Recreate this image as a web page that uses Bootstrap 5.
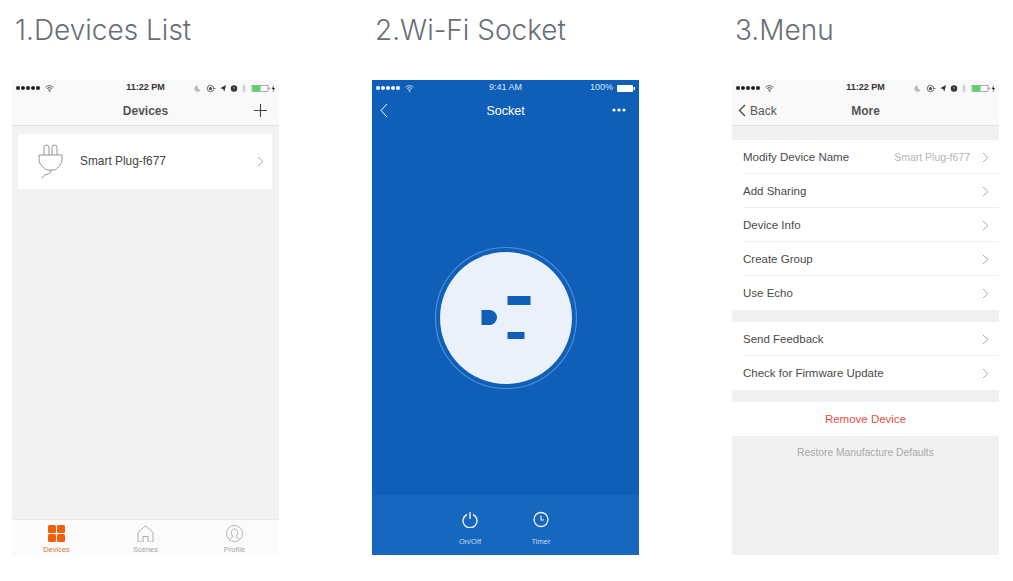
<!DOCTYPE html>
<html lang="en">
<head>
  <meta charset="UTF-8">
  <meta name="viewport" content="width=device-width, initial-scale=1.0">
  <title>App Guide</title>
  <link href="https://cdn.jsdelivr.net/npm/bootstrap@5.3.2/dist/css/bootstrap.min.css" rel="stylesheet">
  <style>
    body {
      background-color: #fff;
      font-family: "Liberation Sans", Arial, sans-serif;
      color: #444;
      overflow: hidden;
    }
    .guide-page {
      padding-left: 12px;
      gap: 93px;
      height: 581px;
    }
    .guide-col {
      width: 267px;
    }
    .guide-title {
      height: 80px;
      margin: 0;
      padding: 11px 0 0 3px;
      font-family: "Inter", sans-serif;
      font-weight: 300;
      font-size: 28px;
      line-height: 38px;
      color: #6a6f75;
    }
    .phone {
      height: 475px;
      font-size: 11.5px;
    }
    .phone-light { background-color: #f2f2f2; }
    .phone-blue { background-color: #0f5fb8; color: #fff; }
    .status-row {
      height: 18px;
      padding: 0 4px 2px;
      font-size: 9px;
      position: relative;
    }
    .status-time {
      position: absolute;
      left: 0;
      right: 0;
      text-align: center;
      font-weight: 700;
      color: #333;
    }
    .phone-blue .status-time { font-weight: 400; color: #dbe8f7; }
    .top-head { background-color: #f9f9f9; border-bottom: 1px solid #e2e2e2; }
    .nav-row {
      height: 27px;
      padding: 0 12px 3px 6px;
      position: relative;
    }
    .nav-name {
      position: absolute;
      left: 0;
      right: 0;
      top: 4px;
      text-align: center;
      font-size: 12px;
      font-weight: 700;
      color: #555;
    }
    .phone-blue .nav-name { font-weight: 400; font-size: 12.5px; color: #fff; }
    .phone-blue .nav-row { padding-left: 8px; padding-right: 13px; }
    .nav-back { font-size: 12px; color: #555; margin: 1px 0 0 4px; }
    .device-tile {
      margin: 8px 7px 0 6px;
      height: 55px;
      background-color: #fff;
      padding: 0 8px 0 20px;
    }
    .device-name { margin-left: 15px; font-size: 11.9px; }
    .tab-row {
      height: 36px;
      background-color: #fbfbfb;
      border-top: 1px solid #e9e9e9;
      font-size: 7.5px;
      color: #a5a5a5;
    }
    .tab-cell { width: 89px; line-height: 8px; padding-top: 5px; }
    .tab-on { color: #e8703a; }
    .tab-label { margin-top: 4px; }
    .socket-wrap { padding-top: 16px; }
    .socket-foot {
      height: 60px;
      background-color: #1767be;
      gap: 41px;
      padding-top: 16px;
      font-size: 7.5px;
      color: #c5d9f0;
    }
    .foot-cell { width: 30px; line-height: 8px; }
    .foot-label { margin-top: 10px; }
    .menu-gap { height: 14px; background-color: #f1f1f1; }
    .menu-gap-sm { height: 12px; background-color: #f1f1f1; }
    .menu-group { background-color: #fff; }
    .menu-line {
      height: 34px;
      padding: 1px 10px 0 11px;
      color: #4a4a4a;
      position: relative;
    }
    .menu-line svg { margin-top: -1px; }
    .menu-line + .menu-line::before {
      content: "";
      position: absolute;
      top: -1px;
      left: 12px;
      right: 0;
      border-top: 1px solid #eee;
    }
    .menu-note { font-size: 10.5px; color: #b5b5b5; margin-right: 12px; }
    .menu-danger { height: 34px; padding-top: 1px; background-color: #fff; color: #e8503f; }
    .menu-rest {
      background-color: #f1f1f1;
      padding-top: 9px;
      font-size: 10.3px;
      color: #aaa;
    }
  </style>
</head>
<body>

  <svg width="0" height="0" class="position-absolute">
    <symbol id="ico-wifi" viewBox="0 0 10 8">
      <path d="M.5 2.600a6.400 6.400 0 0 1 9 0M2 4.200a4.300 4.300 0 0 1 6 0M3.400 5.700a2.200 2.200 0 0 1 3.200 0" fill="none" stroke="currentColor" stroke-width=".8"/>
      <path d="M5 8 3.900 6.800a1.500 1.500 0 0 1 2.200 0z" fill="currentColor"/>
    </symbol>
    <symbol id="ico-chev" viewBox="0 0 7 11">
      <path d="M1 1l5 4.500-5 4.500" fill="none" stroke="#a9a9a9" stroke-width="1"/>
    </symbol>
    <symbol id="ico-dots" viewBox="0 0 25 4">
      <g fill="currentColor"><circle cx="2" cy="2" r="2"/><circle cx="7" cy="2" r="2"/><circle cx="12" cy="2" r="2"/><circle cx="17" cy="2" r="2"/><circle cx="22" cy="2" r="2"/></g>
    </symbol>
    <symbol id="ico-status" viewBox="0 0 84 9">
      <path d="M7 1.200a3.300 3.300 0 1 0 2.600 5A3.500 3.500 0 0 1 7 1.200z" fill="#b9b9b9"/>
      <circle cx="19.500" cy="4.500" r="3.200" fill="none" stroke="#444" stroke-width=".8"/>
      <circle cx="19.500" cy="4.500" r="1.500" fill="#444"/>
      <path d="M23 4.500h1.500" stroke="#444" stroke-width=".8"/>
      <path d="M35 1l-1.800 7-1-3-3-.8z" fill="#333"/>
      <circle cx="43" cy="4.500" r="3.200" fill="#333"/>
      <path d="M43 3v1.800" stroke="#fff" stroke-width=".7"/>
      <path d="M51.500 2.500l3 4-1.500 2V.5L54.500 2.500l-3 4" fill="none" stroke="#b9b9b9" stroke-width=".7"/>
      <rect x="61" y="1.500" width="16" height="6" fill="#fff" stroke="#777" stroke-width=".6"/>
      <rect x="61.500" y="2" width="8" height="5" fill="#4cd964"/>
      <rect x="77.500" y="3.500" width="1" height="2" fill="#777"/>
      <path d="M83 1l-2.500 4h1.700L81.500 8.500 84 4h-1.700z" fill="#333"/>
    </symbol>
  </svg>

  <div class="guide-page d-flex">

    <div class="guide-col">
      <h1 class="guide-title">1.Devices List</h1>
      <div class="phone phone-light d-flex flex-column">
        <div class="top-head">
          <div class="status-row d-flex align-items-center justify-content-between">
            <span class="status-time">11:22 PM</span>
            <span class="d-flex align-items-center gap-1 text-dark">
              <svg width="25" height="4"><use href="#ico-dots"/></svg>
              <svg width="9" height="7"><use href="#ico-wifi"/></svg>
            </span>
            <svg width="84" height="9"><use href="#ico-status"/></svg>
          </div>
          <div class="nav-row d-flex align-items-center justify-content-end">
            <span class="nav-name">Devices</span>
            <svg width="13" height="13" viewBox="0 0 13 13"><path d="M6.500 0v13M0 6.500h13" stroke="#444" stroke-width="1.100"/></svg>
          </div>
        </div>
        <div class="device-tile d-flex align-items-center">
          <svg width="27" height="36" viewBox="0 0 27 36" class="flex-shrink-0">
            <path d="M6 11V3.500a2.500 2.500 0 0 1 5 0V11M14 11V3.500a2.500 2.500 0 0 1 5 0V11M1 11h23v4c0 5-4 9-7 11H9c-3-2-8-5-8-11zM13 26c0 3-2 4-5 4.500-2 .5-3 2-4 4" fill="none" stroke="#888" stroke-width=".9"/>
          </svg>
          <span class="device-name flex-grow-1">Smart Plug-f677</span>
          <svg width="7" height="11"><use href="#ico-chev"/></svg>
        </div>
        <div class="flex-grow-1"></div>
        <div class="tab-row d-flex justify-content-between text-center">
          <div class="tab-cell tab-on d-flex flex-column align-items-center">
            <svg width="17" height="17" viewBox="0 0 17 17"><g fill="#f2600c"><rect width="8" height="8" rx="1.500"/><rect x="9" width="8" height="8" rx="1.500"/><rect y="9" width="8" height="8" rx="1.500"/><rect x="9" y="9" width="8" height="8" rx="1.500"/></g></svg>
            <span class="tab-label">Devices</span>
          </div>
          <div class="tab-cell d-flex flex-column align-items-center">
            <svg width="17" height="17" viewBox="0 0 17 17"><path d="M1 7.500 8.500.8 16 7.500V17H11V11.500H6V17H1z" fill="none" stroke="#999" stroke-width=".8"/></svg>
            <span class="tab-label">Scenes</span>
          </div>
          <div class="tab-cell d-flex flex-column align-items-center">
            <svg width="19" height="17" viewBox="0 0 19 19" overflow="visible"><circle cx="9.500" cy="9.500" r="9" fill="none" stroke="#999" stroke-width=".8"/><path d="M7.500 12.500c-2.500-3-1.800-8 2-8s4.500 5 2 8c0 1.500 1.500 2 3.500 3M7.500 12.500c0 1.500-1.500 2-3.500 3" fill="none" stroke="#999" stroke-width=".8"/></svg>
            <span class="tab-label">Profile</span>
          </div>
        </div>
      </div>
    </div>

    <div class="guide-col">
      <h1 class="guide-title">2.Wi-Fi Socket</h1>
      <div class="phone phone-blue d-flex flex-column">
        <div class="status-row d-flex align-items-center justify-content-between">
          <span class="status-time">9:41 AM</span>
          <span class="d-flex align-items-center gap-1">
            <svg width="25" height="4"><use href="#ico-dots"/></svg>
            <svg width="9" height="7"><use href="#ico-wifi"/></svg>
          </span>
          <span class="d-flex align-items-center gap-1">
            <span style="color:#dbe8f7">100%</span>
            <svg width="18" height="7" viewBox="0 0 18 7"><rect width="16" height="7" rx="1" fill="#fff"/><rect x="16.500" y="2" width="1.500" height="3" fill="#fff"/></svg>
          </span>
        </div>
        <div class="nav-row d-flex align-items-center justify-content-between">
          <span class="nav-name">Socket</span>
          <svg width="8" height="15" viewBox="0 0 8 15"><path d="M7 1 1 7.500 7 14" fill="none" stroke="#fff" stroke-width="1"/></svg>
          <svg width="14" height="4" viewBox="0 0 14 4"><g fill="#fff"><circle cx="2" cy="2" r="1.600"/><circle cx="7" cy="2" r="1.600"/><circle cx="12" cy="2" r="1.600"/></g></svg>
        </div>
        <div class="socket-wrap flex-grow-1 d-flex align-items-center justify-content-center">
          <svg width="144" height="144" viewBox="0 0 144 144">
            <circle cx="72" cy="72" r="70.500" fill="none" stroke="#4a8fd8" stroke-width="1.200"/>
            <circle cx="72" cy="72" r="66" fill="#eaf1fa"/>
            <path d="M47.500 64H55.500a7.500 7.500 0 0 1 0 15H47.500z" fill="#0f5fb8"/>
            <rect x="73.500" y="50" width="23" height="9" fill="#0f5fb8"/>
            <rect x="73.500" y="86" width="17" height="7" fill="#0f5fb8"/>
          </svg>
        </div>
        <div class="socket-foot d-flex justify-content-center text-center">
          <div class="foot-cell d-flex flex-column align-items-center">
            <svg width="16" height="17" viewBox="0 0 16 17"><path d="M5 3.500a7 7 0 1 0 6 0M8 1v7" fill="none" stroke="#e6f0fb" stroke-width="1.400"/></svg>
            <span class="foot-label">On/Off</span>
          </div>
          <div class="foot-cell d-flex flex-column align-items-center">
            <svg width="16" height="17" viewBox="0 0 16 17"><circle cx="8" cy="8.500" r="7" fill="none" stroke="#e6f0fb" stroke-width="1.400"/><path d="M8 4.500v4.500h3" fill="none" stroke="#e6f0fb" stroke-width="1.100"/></svg>
            <span class="foot-label">Timer</span>
          </div>
        </div>
      </div>
    </div>

    <div class="guide-col">
      <h1 class="guide-title">3.Menu</h1>
      <div class="phone d-flex flex-column">
        <div class="top-head">
          <div class="status-row d-flex align-items-center justify-content-between">
            <span class="status-time">11:22 PM</span>
            <span class="d-flex align-items-center gap-1 text-dark">
              <svg width="25" height="4"><use href="#ico-dots"/></svg>
              <svg width="9" height="7"><use href="#ico-wifi"/></svg>
            </span>
            <svg width="84" height="9"><use href="#ico-status"/></svg>
          </div>
          <div class="nav-row d-flex align-items-center">
            <span class="nav-name">More</span>
            <svg width="8" height="13" viewBox="0 0 8 13"><path d="M7 1 1.500 6.500 7 12" fill="none" stroke="#444" stroke-width="1.300"/></svg>
            <span class="nav-back">Back</span>
          </div>
        </div>
        <div class="menu-gap"></div>
        <div class="menu-group">
          <div class="menu-line d-flex align-items-center">
            <span class="flex-grow-1">Modify Device Name</span>
            <span class="menu-note">Smart Plug-f677</span>
            <svg width="7" height="11"><use href="#ico-chev"/></svg>
          </div>
          <div class="menu-line d-flex align-items-center justify-content-between">
            <span>Add Sharing</span>
            <svg width="7" height="11"><use href="#ico-chev"/></svg>
          </div>
          <div class="menu-line d-flex align-items-center justify-content-between">
            <span>Device Info</span>
            <svg width="7" height="11"><use href="#ico-chev"/></svg>
          </div>
          <div class="menu-line d-flex align-items-center justify-content-between">
            <span>Create Group</span>
            <svg width="7" height="11"><use href="#ico-chev"/></svg>
          </div>
          <div class="menu-line d-flex align-items-center justify-content-between">
            <span>Use Echo</span>
            <svg width="7" height="11"><use href="#ico-chev"/></svg>
          </div>
        </div>
        <div class="menu-gap-sm"></div>
        <div class="menu-group">
          <div class="menu-line d-flex align-items-center justify-content-between">
            <span>Send Feedback</span>
            <svg width="7" height="11"><use href="#ico-chev"/></svg>
          </div>
          <div class="menu-line d-flex align-items-center justify-content-between">
            <span>Check for Firmware Update</span>
            <svg width="7" height="11"><use href="#ico-chev"/></svg>
          </div>
        </div>
        <div class="menu-gap-sm"></div>
        <div class="menu-danger d-flex align-items-center justify-content-center">Remove Device</div>
        <div class="menu-rest flex-grow-1 text-center">Restore Manufacture Defaults</div>
      </div>
    </div>

  </div>

</body>
</html>
